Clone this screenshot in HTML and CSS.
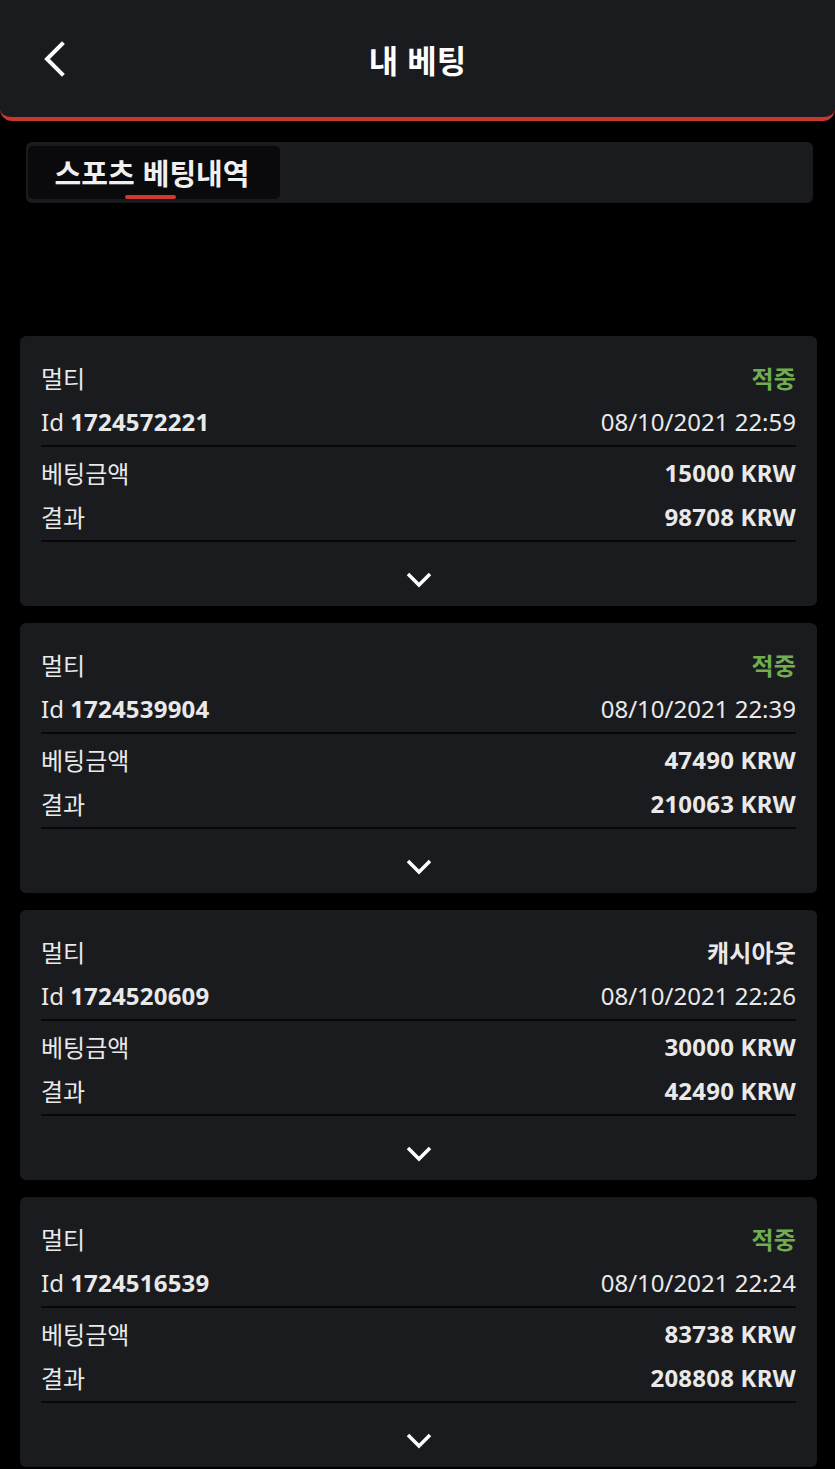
FILE: index.html
```html
<!DOCTYPE html>
<html lang="ko">
<head>
  <meta charset="UTF-8">
  <meta name="viewport" content="width=device-width, initial-scale=1">
  <title>내 베팅</title>
  <link rel="stylesheet" href="styles.css">
</head>
<body>
  <header class="topbar">
    <button class="back" type="button" aria-label="뒤로">
      <svg width="24" height="36" viewBox="0 0 24 36"><path d="M20 3 L5 18 L20 33" fill="none" stroke="#fff" stroke-width="4" stroke-linecap="square"/></svg>
    </button>
    <h1 class="title">내 베팅</h1>
    <span></span>
  </header>

  <nav class="tabs">
    <a class="tab active" href="#">스포츠 베팅내역</a>
  </nav>

  <main class="bets">
    <section class="bet">
      <div class="group">
        <div class="row"><span>멀티</span><b class="status win">적중</b></div>
        <div class="row"><span>Id <b>1724572221</b></span><span>08/10/2021 22:59</span></div>
      </div>
      <div class="group">
        <div class="row"><span>베팅금액</span><b>15000 KRW</b></div>
        <div class="row"><span>결과</span><b>98708 KRW</b></div>
      </div>
      <div class="more">
        <svg width="28" height="18" viewBox="0 0 28 18"><path d="M3 3 L14 14 L25 3" fill="none" stroke="#fff" stroke-width="3.5"/></svg>
      </div>
    </section>

    <section class="bet">
      <div class="group">
        <div class="row"><span>멀티</span><b class="status win">적중</b></div>
        <div class="row"><span>Id <b>1724539904</b></span><span>08/10/2021 22:39</span></div>
      </div>
      <div class="group">
        <div class="row"><span>베팅금액</span><b>47490 KRW</b></div>
        <div class="row"><span>결과</span><b>210063 KRW</b></div>
      </div>
      <div class="more">
        <svg width="28" height="18" viewBox="0 0 28 18"><path d="M3 3 L14 14 L25 3" fill="none" stroke="#fff" stroke-width="3.5"/></svg>
      </div>
    </section>

    <section class="bet">
      <div class="group">
        <div class="row"><span>멀티</span><b class="status">캐시아웃</b></div>
        <div class="row"><span>Id <b>1724520609</b></span><span>08/10/2021 22:26</span></div>
      </div>
      <div class="group">
        <div class="row"><span>베팅금액</span><b>30000 KRW</b></div>
        <div class="row"><span>결과</span><b>42490 KRW</b></div>
      </div>
      <div class="more">
        <svg width="28" height="18" viewBox="0 0 28 18"><path d="M3 3 L14 14 L25 3" fill="none" stroke="#fff" stroke-width="3.5"/></svg>
      </div>
    </section>

    <section class="bet">
      <div class="group">
        <div class="row"><span>멀티</span><b class="status win">적중</b></div>
        <div class="row"><span>Id <b>1724516539</b></span><span>08/10/2021 22:24</span></div>
      </div>
      <div class="group">
        <div class="row"><span>베팅금액</span><b>83738 KRW</b></div>
        <div class="row"><span>결과</span><b>208808 KRW</b></div>
      </div>
      <div class="more">
        <svg width="28" height="18" viewBox="0 0 28 18"><path d="M3 3 L14 14 L25 3" fill="none" stroke="#fff" stroke-width="3.5"/></svg>
      </div>
    </section>
  </main>
</body>
</html>
```

FILE: styles.css
```css
body {
  margin: 0;
  background: #000;
  color: #e9e9e9;
  font-family: "Noto Sans", "Noto Sans CJK KR", sans-serif;
}

.topbar {
  display: grid;
  grid-template-columns: 1fr auto 1fr;
  align-items: center;
  height: 117px;
  background: #1a1b1f;
  border-bottom: 4px solid #c8362e;
  border-radius: 0 0 12px 12px;
}
.back {
  justify-self: start;
  margin-left: 42px;
  padding: 0;
  border: 0;
  background: none;
  display: flex;
}
.title {
  margin: 0;
  color: #fff;
  font-size: 32px;
  font-weight: bold;
  font-family: "Noto Sans CJK KR", sans-serif;
}

.tabs {
  display: flex;
  margin: 21px 22px 0 26px;
  padding: 4px 2px;
  background: #1a1b1f;
  border-radius: 6px;
}
.tab {
  position: relative;
  display: block;
  width: 252px;
  height: 53px;
  line-height: 53px;
  text-align: center;
  text-indent: -4px;
  color: #f0f0f0;
  font-size: 29px;
  font-weight: bold;
  font-family: "Noto Sans CJK KR", sans-serif;
  text-decoration: none;
  background: #0a0a0c;
  border-radius: 5px;
}
.tab.active::after {
  content: "";
  position: absolute;
  left: 97px;
  bottom: 0;
  width: 51px;
  height: 4px;
  border-radius: 2px;
  background: #d0392f;
}

.bets {
  display: flex;
  flex-direction: column;
  gap: 17px;
  margin: 133px 18px 0 20px;
}
.bet {
  background: #1a1b1f;
  border-radius: 6px;
  padding: 16px 21px 0;
}
.group {
  padding-top: 5px;
  border-bottom: 2px solid #08080a;
}
.row {
  display: flex;
  justify-content: space-between;
  align-items: center;
  box-sizing: border-box;
  height: 44px;
  padding-bottom: 4px;
  font-size: 24px;
}
.row b {
  letter-spacing: 0.2px;
}
.status {
  font-family: "Noto Sans CJK KR", sans-serif;
}
.status.win {
  color: #70ad50;
}
.more {
  display: flex;
  justify-content: center;
  height: 64px;
  padding-top: 29px;
  box-sizing: border-box;
}
```
